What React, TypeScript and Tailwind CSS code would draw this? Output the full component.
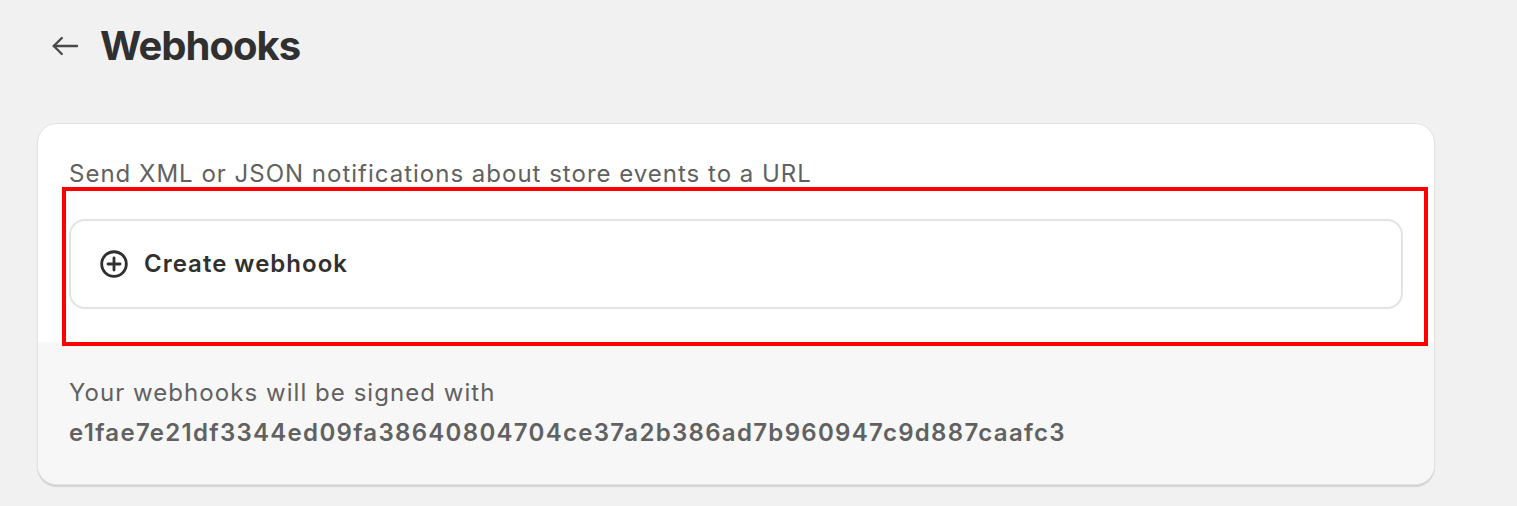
import React from 'react';

export default function App() {
    return (
        <div className="min-h-screen w-full bg-[#f1f1f1] text-[#303030]" style={{ fontFamily: 'Inter, "Noto Sans", sans-serif' }}>
            {/* Header */}
            <header className="flex items-center h-[92px] pl-[49px]">
                <button className="w-[32px] h-[32px] flex items-center justify-center text-[#4a4a4a]">
                    <svg width="32" height="32" viewBox="0 0 20 20" fill="none" stroke="currentColor" strokeWidth="1.5" strokeLinecap="round" strokeLinejoin="round">
                        <path d="M17.5 10H3" />
                        <path d="M8 5L3 10L8 15" />
                    </svg>
                </button>
                <h1 className="ml-[19px] text-[40px] font-bold leading-none tracking-[-1px] text-[#303030]">Webhooks</h1>
            </header>

            {/* Card */}
            <div className="relative mt-[31px] ml-[37px] w-[1398px] rounded-[20px] border border-[#e3e3e3] bg-white shadow-[0_2px_1px_rgba(0,0,0,0.12)] overflow-hidden">
                <div className="px-[31px] pt-[32px] pb-[33px]">
                    <p className="text-[24px] leading-[36px] tracking-[1px] text-[#616161]">Send XML or JSON notifications about store events to a URL</p>
                    <button className="mt-[27px] w-full h-[90px] flex items-center gap-[15px] pl-[28px] rounded-[16px] border-2 border-[#e3e3e3] bg-white">
                        <svg width="30" height="30" viewBox="0 0 20 20" fill="none" stroke="#303030" strokeWidth="1.9" strokeLinecap="round">
                            <circle cx="10" cy="10" r="8.2" />
                            <path d="M10 6V14" />
                            <path d="M6 10H14" />
                        </svg>
                        <span className="text-[24px] font-semibold tracking-[1px] text-[#303030]">Create webhook</span>
                    </button>
                </div>
                <div className="bg-[#f7f7f7] px-[31px] pt-[31px] pb-[31px]">
                    <p className="text-[24px] leading-[40px] tracking-[1.05px] text-[#616161]">Your webhooks will be signed with</p>
                    <p className="text-[24px] leading-[40px] font-semibold tracking-[1.3px] text-[#616161]">e1fae7e21df3344ed09fa38640804704ce37a2b386ad7b960947c9d887caafc3</p>
                </div>

                {/* highlight annotation */}
                <div className="absolute left-[24px] top-[63px] w-[1366px] h-[159px] border-[4px] border-[#ff0000] pointer-events-none" />
            </div>
        </div>
    );
}
